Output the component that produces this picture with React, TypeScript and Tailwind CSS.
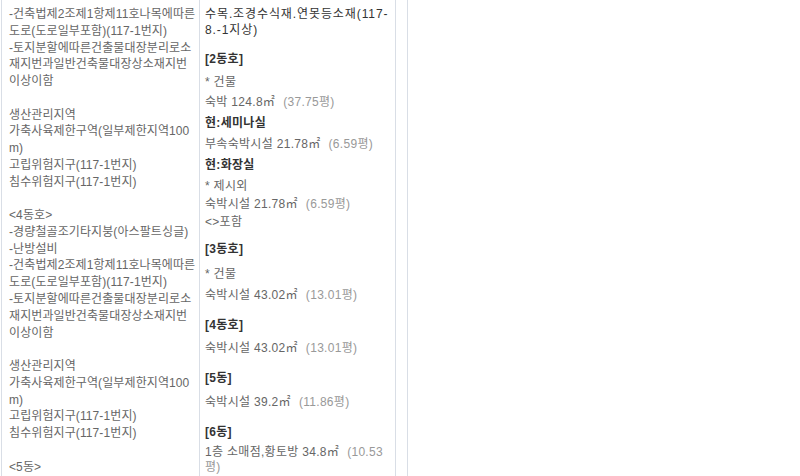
const leftLines: string[] = [
  "-건축법제2조제1항제11호나목에따른",
  "도로(도로일부포함)(117-1번지)",
  "-토지분할에따른건출물대장분리로소",
  "재지번과일반건축물대장상소재지번",
  "이상이함",
  "",
  "생산관리지역",
  "가축사육제한구역(일부제한지역100",
  "m)",
  "고립위험지구(117-1번지)",
  "침수위험지구(117-1번지)",
  "",
  "<4동호>",
  "-경량철골조기타지붕(아스팔트싱글)",
  "-난방설비",
  "-건축법제2조제1항제11호나목에따른",
  "도로(도로일부포함)(117-1번지)",
  "-토지분할에따른건출물대장분리로소",
  "재지번과일반건축물대장상소재지번",
  "이상이함",
  "",
  "생산관리지역",
  "가축사육제한구역(일부제한지역100",
  "m)",
  "고립위험지구(117-1번지)",
  "침수위험지구(117-1번지)",
  "",
  "<5동>",
];

function Area({ name, m2, py }: { name: string; m2: string; py: string }) {
  return (
    <div className="whitespace-nowrap">
      {name} {m2}㎡<span className="ml-[8px] text-[#999]">({py}평)</span>
    </div>
  );
}

export default function App() {
  return (
    <div
      className="w-[800px] h-[476px] overflow-hidden bg-white flex text-[12px] text-[#666]"
      style={{ fontFamily: '"Liberation Sans", "Noto Sans CJK KR", sans-serif' }}
    >
      <div className="ml-[1px] flex border-l border-[#d9dee6] h-full">
        {/* left cell */}
        <div className="w-[198px] border-r border-[#d9dee6] pl-[7px] pt-[6px] leading-[16.78px] tracking-[0.1px] whitespace-nowrap">
          {leftLines.map((l, i) => (
            <div key={i} className="h-[16.78px]">
              {l}
            </div>
          ))}
        </div>
        {/* right cell */}
        <div className="w-[196px] border-r border-[#d9dee6] pl-[5px] pr-[3px] pt-[6px] tracking-[0.3px] leading-[18px]">
          <div className="leading-[16px] text-[#333] tracking-[0.9px] whitespace-nowrap">
            수목.조경수식재.연못등소재(117-
            <br />
            8.-1지상)
          </div>
          <div className="mt-[12px] font-bold text-[#333]">[2동호]</div>
          <div className="mt-[5px]">* 건물</div>
          <div className="mt-[2px]">
            <Area name="숙박" m2="124.8" py="37.75" />
          </div>
          <div className="mt-[3px] font-bold text-[#333]">현:세미나실</div>
          <div className="mt-[3px]">
            <Area name="부속숙박시설" m2="21.78" py="6.59" />
          </div>
          <div className="mt-[3px] font-bold text-[#333]">현:화장실</div>
          <div className="mt-[3px]">
            <div>* 제시외</div>
            <Area name="숙박시설" m2="21.78" py="6.59" />
            <div>&lt;&gt;포함</div>
          </div>
          <div className="mt-[9px] font-bold text-[#333]">[3동호]</div>
          <div className="mt-[7px]">* 건물</div>
          <div className="mt-[3px]">
            <Area name="숙박시설" m2="43.02" py="13.01" />
          </div>
          <div className="mt-[12px] font-bold text-[#333]">[4동호]</div>
          <div className="mt-[5px]">
            <Area name="숙박시설" m2="43.02" py="13.01" />
          </div>
          <div className="mt-[12px] font-bold text-[#333]">[5동]</div>
          <div className="mt-[6px]">
            <Area name="숙박시설" m2="39.2" py="11.86" />
          </div>
          <div className="mt-[12px] font-bold text-[#333]">[6동]</div>
          <div className="mt-[4px] leading-[15px] whitespace-nowrap">
            1층 소매점,황토방 34.8㎡<span className="ml-[8px] text-[#999]">(10.53</span>
            <br />
            <span className="text-[#999]">평)</span>
          </div>
        </div>
      </div>
      <div className="ml-[11px] h-full border-l border-[#d9dee6]" />
    </div>
  );
}
